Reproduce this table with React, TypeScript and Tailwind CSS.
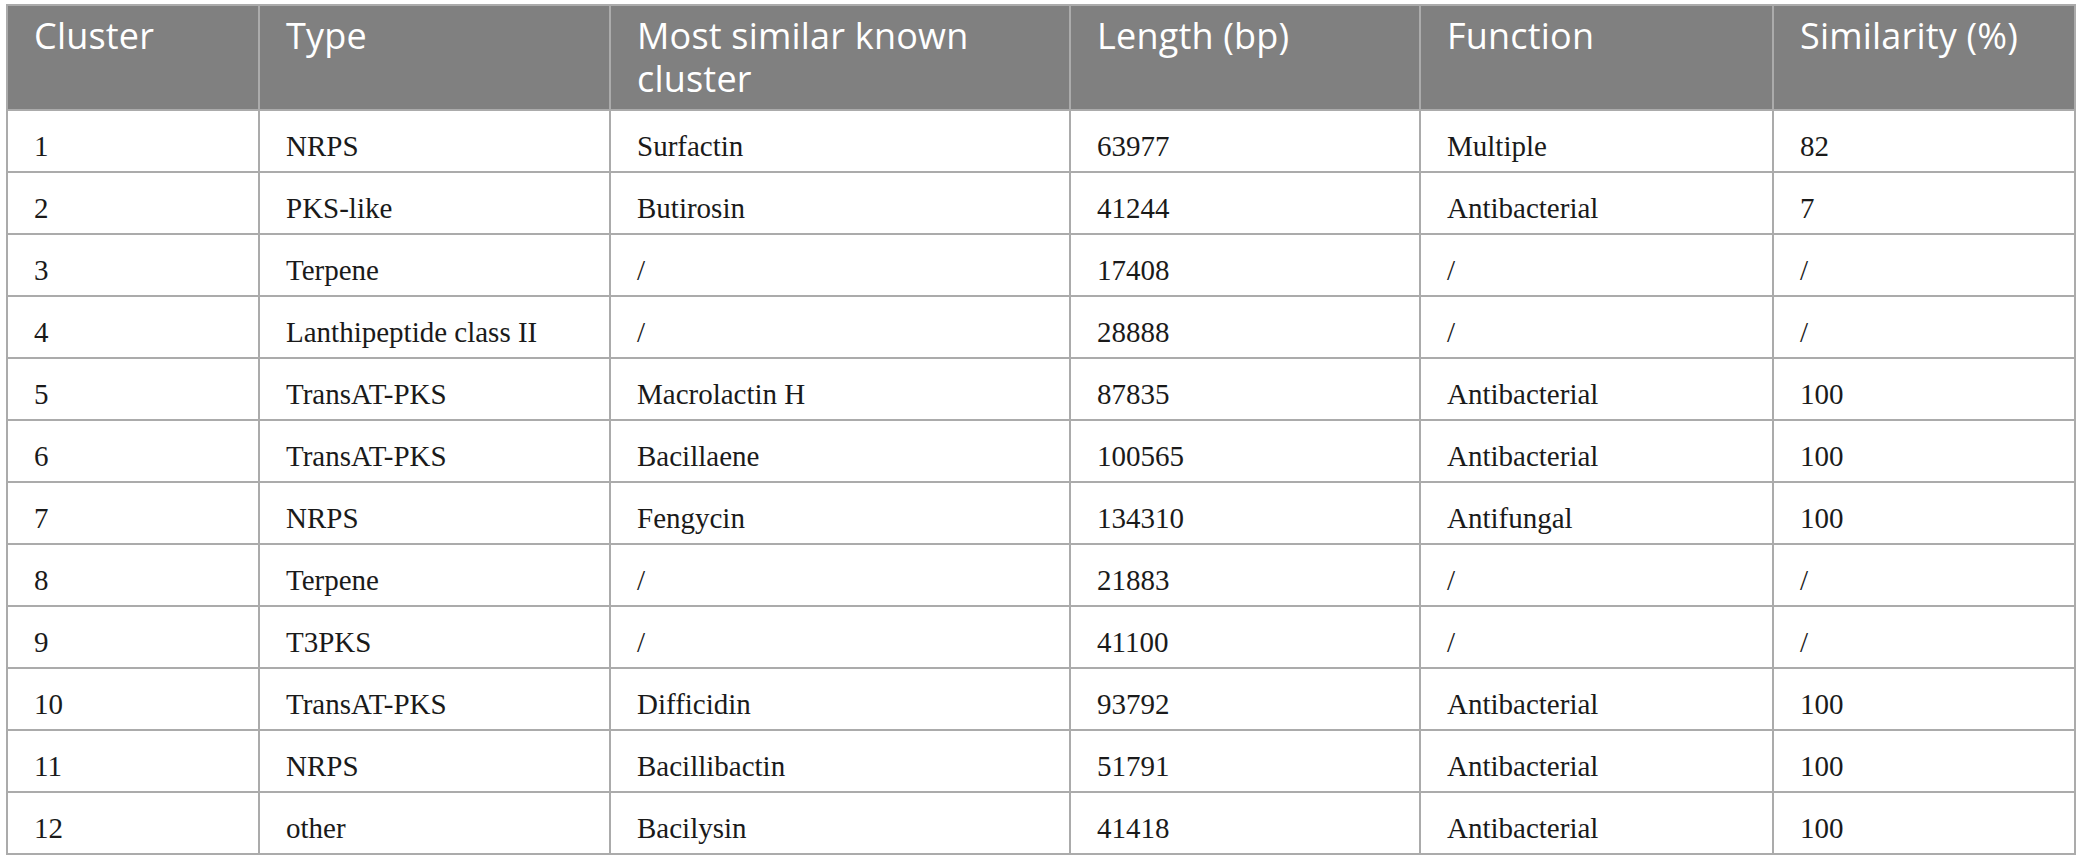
import React from 'react';

const headers = ['Cluster', 'Type', 'Most similar known cluster', 'Length (bp)', 'Function', 'Similarity (%)'];

const widths = ['w-[252px]', 'w-[351px]', 'w-[460px]', 'w-[350px]', 'w-[353px]', 'w-[302px]'];

const rows = [
  ['1', 'NRPS', 'Surfactin', '63977', 'Multiple', '82'],
  ['2', 'PKS-like', 'Butirosin', '41244', 'Antibacterial', '7'],
  ['3', 'Terpene', '/', '17408', '/', '/'],
  ['4', 'Lanthipeptide class II', '/', '28888', '/', '/'],
  ['5', 'TransAT-PKS', 'Macrolactin H', '87835', 'Antibacterial', '100'],
  ['6', 'TransAT-PKS', 'Bacillaene', '100565', 'Antibacterial', '100'],
  ['7', 'NRPS', 'Fengycin', '134310', 'Antifungal', '100'],
  ['8', 'Terpene', '/', '21883', '/', '/'],
  ['9', 'T3PKS', '/', '41100', '/', '/'],
  ['10', 'TransAT-PKS', 'Difficidin', '93792', 'Antibacterial', '100'],
  ['11', 'NRPS', 'Bacillibactin', '51791', 'Antibacterial', '100'],
  ['12', 'other', 'Bacilysin', '41418', 'Antibacterial', '100'],
];

const App = () => {
  return (
    <div className="min-h-screen bg-white pl-[6px] pt-[4px]">
      <table className="table-fixed border-collapse w-[2068px] border-2 border-[#ababab]">
        <colgroup>
          {widths.map((w, i) => (
            <col key={i} className={w} />
          ))}
        </colgroup>
        <thead>
          <tr className="bg-[#808080] h-[105px]">
            {headers.map((h, i) => (
              <th
                key={i}
                className="border-2 border-[#ababab] align-top text-left font-normal text-white pl-[26px] pr-[20px] pt-[8px] pb-[9px] text-[36px] leading-[43px] tracking-[0.2px] font-['Open_Sans',sans-serif]"
              >
                {h}
              </th>
            ))}
          </tr>
        </thead>
        <tbody>
          {rows.map((r, i) => (
            <tr key={i} className="h-[62px]">
              {r.map((c, j) => (
                <td
                  key={j}
                  className="border-2 border-[#ababab] align-top text-[#1a1a1a] pl-[26px] pr-[20px] pt-[19px] pb-[7px] text-[29px] leading-[32px] font-['Liberation_Serif',serif]"
                >
                  {c}
                </td>
              ))}
            </tr>
          ))}
        </tbody>
      </table>
    </div>
  );
};

export default App;
